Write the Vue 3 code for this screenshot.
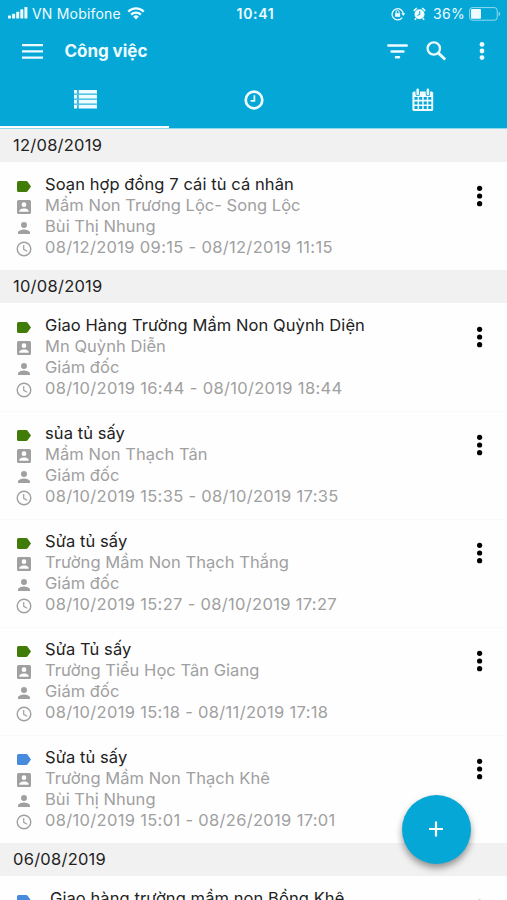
<script setup>
const groups = [
  {
    date: '12/08/2019',
    tasks: [
      { title: 'Soạn hợp đồng 7 cái tù cá nhân', place: 'Mầm Non Trương Lộc- Song Lộc', person: 'Bùi Thị Nhung', time: '08/12/2019 09:15 - 08/12/2019 11:15', tag: 'green' },
    ],
  },
  {
    date: '10/08/2019',
    tasks: [
      { title: 'Giao Hàng Trường Mầm Non Quỳnh Diện', place: 'Mn Quỳnh Diễn', person: 'Giám đốc', time: '08/10/2019 16:44 - 08/10/2019 18:44', tag: 'green' },
      { title: 'sủa tủ sấy', place: 'Mầm Non Thạch Tân', person: 'Giám đốc', time: '08/10/2019 15:35 - 08/10/2019 17:35', tag: 'green' },
      { title: 'Sửa tủ sấy', place: 'Trường Mầm Non Thạch Thắng', person: 'Giám đốc', time: '08/10/2019 15:27 - 08/10/2019 17:27', tag: 'green' },
      { title: 'Sửa Tủ sấy', place: 'Trường Tiểu Học Tân Giang', person: 'Giám đốc', time: '08/10/2019 15:18 - 08/11/2019 17:18', tag: 'green' },
      { title: 'Sửa tủ sấy', place: 'Trường Mầm Non Thạch Khê', person: 'Bùi Thị Nhung', time: '08/10/2019 15:01 - 08/26/2019 17:01', tag: 'blue' },
    ],
  },
  {
    date: '06/08/2019',
    tasks: [
      { title: 'Giao hàng trường mầm non Bồng Khê', place: '', person: '', time: '', tag: 'blue', indent: true },
    ],
  },
]
</script>

<template>
  <div class="screen">
    <header class="top">
      <div class="status">
        <div class="carrier">
          <svg class="signal" width="20" height="12" viewBox="0 0 20 12" fill="currentColor">
            <rect x="0" y="8.4" width="3" height="3.2" rx=".6" /><rect x="4.1" y="6.8" width="3" height="4.8" rx=".6" />
            <rect x="8.2" y="4.7" width="3" height="6.9" rx=".6" /><rect x="12.3" y="2.3" width="3" height="9.3" rx=".6" />
            <rect x="16.4" y="0" width="3" height="11.6" rx=".6" />
          </svg>
          <span>VN Mobifone</span>
          <svg class="wifi" width="18" height="13" viewBox="0 0 18 13" fill="none" stroke="currentColor" stroke-width="2.2">
            <path d="M1.2 4.6a11 11 0 0 1 15.6 0M4.1 7.6a7 7 0 0 1 9.8 0" />
            <path d="M9 12.5 6.2 9.7a4 4 0 0 1 5.6 0z" fill="currentColor" stroke="none" />
          </svg>
        </div>
        <strong class="clock">10:41</strong>
        <div class="power">
          <svg width="15" height="14" viewBox="0 0 15 14" fill="none" stroke="currentColor" stroke-width="1.3">
            <path d="M11.2 10.7A5.6 5.6 0 1 1 12.3 7" /><path d="M10.3 6.3h4l-2 2.6z" fill="currentColor" stroke="none" />
            <rect x="4.1" y="6.2" width="5" height="3.6" fill="currentColor" stroke="none" /><path d="M5.1 6.5V5a1.5 1.5 0 0 1 3 0v1.5" stroke-width="1" />
          </svg>
          <svg class="alarm" width="13" height="14" viewBox="0 0 13 14">
            <circle cx="6.5" cy="7.3" r="5" fill="currentColor" />
            <path d="M.8 3.8 3.8 1M9.2 1l3 2.8M3.1 11.2l-1.2 1.7M9.9 11.2l1.2 1.7" stroke="currentColor" stroke-width="1.6" fill="none" />
            <path d="M6.7 4.2v3.3L4.5 8.4" fill="none" stroke="#05a7d6" stroke-width="1" />
          </svg>
          <span>36%</span>
          <svg class="battery" width="32" height="14" viewBox="0 0 32 14">
            <rect x=".6" y=".6" width="27.6" height="12.6" rx="2.8" fill="none" stroke="currentColor" stroke-opacity=".6" />
            <rect x="2" y="2" width="10" height="9.8" rx="1" fill="currentColor" />
            <path d="M29.6 4.8q1.6.6 1.6 2.2t-1.6 2.2z" fill="currentColor" opacity=".6" />
          </svg>
        </div>
      </div>

      <div class="bar">
        <svg width="21" height="15" viewBox="0 0 21 15" fill="currentColor"><path d="M0 0h21v2.3H0zM0 6.2h21v2.3H0zM0 12.4h21v2.3H0z" /></svg>
        <h1>Công việc</h1>
        <svg class="filter" width="21" height="15" viewBox="0 0 21 15" fill="none" stroke="currentColor" stroke-width="2.5" stroke-linecap="round"><path d="M1.3 1.5h18.4M4.6 7.4h11.8M9 13.2h3" /></svg>
        <svg class="search" width="21" height="20" viewBox="0 0 21 20" fill="none" stroke="currentColor"><circle cx="7.8" cy="7.5" r="6.2" stroke-width="2.3" /><path d="m12.2 11.9 7 6.6" stroke-width="2.9" /></svg>
        <svg class="more" width="6" height="20" viewBox="0 0 6 20" fill="currentColor"><circle cx="3" cy="3.4" r="2.4" /><circle cx="3" cy="10" r="2.4" /><circle cx="3" cy="16.6" r="2.4" /></svg>
      </div>

      <nav class="tabs">
        <div class="tab active">
          <svg width="23" height="19" viewBox="0 0 23 19" fill="currentColor">
            <path d="M0 0h3.2v3.4H0zM4.7 0H23v3.4H4.7zM0 5h3.2v3.4H0zM4.7 5H23v3.4H4.7zM0 10h3.2v3.4H0zM4.7 10H23v3.4H4.7zM0 15h3.2v3.4H0zM4.7 15H23v3.4H4.7z" />
            <path d="M0 3.4h23V5H0zM0 8.4h23V10H0zM0 13.4h23V15H0z" opacity=".35" />
          </svg>
        </div>
        <div class="tab">
          <svg width="20" height="20" viewBox="0 0 20 20" fill="none" stroke="currentColor"><circle cx="10" cy="10" r="8.3" stroke-width="2.7" /><path d="M10.4 5.2v5.6H6.6" stroke-width="1.7" /></svg>
        </div>
        <div class="tab">
          <svg width="22" height="24" viewBox="0 0 22 24">
            <rect x=".4" y="3.6" width="20.8" height="19.4" rx="1.6" fill="currentColor" />
            <path d="M5.7 1.9v4M15.9 1.9v4" stroke="#05a7d6" stroke-width="4.4" stroke-linecap="round" />
            <path d="M5.7 1.9v4M15.9 1.9v4" stroke="currentColor" stroke-width="2.6" stroke-linecap="round" />
            <path d="M2.5 8.9h3.1v2.9H2.5zM7.1 8.9h3.1v2.9H7.1zM11.7 8.9h3.1v2.9h-3.1zM16.3 8.9h3v2.9h-3zM2.5 13.4h3.1v3H2.5zM7.1 13.4h3.1v3H7.1zM11.7 13.4h3.1v3h-3.1zM16.3 13.4h3v3h-3zM2.5 18.1h3.1v3H2.5zM7.1 18.1h3.1v3H7.1zM11.7 18.1h3.1v3h-3.1zM16.3 18.1h3v3h-3z" fill="#05a7d6" />
          </svg>
        </div>
      </nav>
    </header>

    <main>
      <section v-for="g in groups" :key="g.date">
        <h2>{{ g.date }}</h2>
        <article v-for="t in g.tasks" :key="t.time" class="task">
          <div class="lines">
            <div class="line title" :class="{ indent: t.indent }">
              <svg width="14" height="11" viewBox="0 0 14 11" :class="t.tag"><path d="M1.5 0h7.7q.9 0 1.4.7L14 5.5l-3.4 4.8q-.5.7-1.4.7H1.5Q0 11 0 9.5v-8Q0 0 1.5 0z" fill="currentColor" /></svg>
              <span>{{ t.title }}</span>
            </div>
            <div class="line">
              <svg width="14" height="14" viewBox="3 3 18 18"><path fill="currentColor" d="M3 5v14a2 2 0 0 0 2 2h14a2 2 0 0 0 2-2V5a2 2 0 0 0-2-2H5a2 2 0 0 0-2 2zm12 4a3 3 0 1 1-6 0 3 3 0 0 1 6 0zm-9 8c0-2 4-3.1 6-3.1s6 1.1 6 3.1v1H6z" /></svg>
              <span>{{ t.place }}</span>
            </div>
            <div class="line">
              <svg width="12" height="12" viewBox="4 4 16 16"><path fill="currentColor" d="M12 12a4 4 0 1 0 0-8 4 4 0 0 0 0 8zm0 2c-2.7 0-8 1.3-8 4v2h16v-2c0-2.7-5.3-4-8-4z" /></svg>
              <span>{{ t.person }}</span>
            </div>
            <div class="line time">
              <svg width="16" height="16" viewBox="0 0 16 16" fill="none" stroke="currentColor" stroke-width="1.4"><circle cx="8" cy="8" r="6.8" /><path d="M7.7 4v4.3l3.4 2" stroke-width="1.2" /></svg>
              <span>{{ t.time }}</span>
            </div>
          </div>
          <svg class="dots" width="6" height="22" viewBox="0 0 6 22" fill="#000"><circle cx="2.6" cy="3.3" r="2.6" /><circle cx="2.6" cy="11" r="2.6" /><circle cx="2.6" cy="18.7" r="2.6" /></svg>
        </article>
      </section>
    </main>

    <button class="fab" aria-label="+">
      <svg width="14" height="16" viewBox="0 0 14 16" stroke="#fff" stroke-width="2.2"><path d="M0 8h14M7 .5v15" /></svg>
    </button>
  </div>
</template>

<style>
body { margin: 0; background: #fff; }
</style>
<style scoped>
.screen { position: relative; width: 507px; height: 900px; overflow: hidden; background: #fefefe; font-family: Inter, "Noto Sans", sans-serif; color: #222; }
svg { display: block; flex: none; }
.top { height: 129px; box-sizing: border-box; background: #05a7d6; color: #eefbff; display: flex; flex-direction: column; }
.status { height: 27px; display: grid; grid-template-columns: 1fr auto 1fr; align-items: center; padding: 0 6px 0 8px; font-size: 14px; }
.carrier, .power { display: flex; align-items: center; }
.carrier span { margin-left: 4px; letter-spacing: .2px; }
.signal { margin-top: -2px; }
.wifi { margin-left: 6.5px; margin-top: -1px; }
.clock { font-weight: 600; font-size: 14px; letter-spacing: .7px; padding-left: 2px; }
.power { justify-content: flex-end; }
.power > svg:first-child { margin-right: 1px; }
.alarm { margin-left: 6px; }
.power span { margin-left: 7px; font-size: 14px; letter-spacing: .3px; }
.battery { margin-left: 4px; }
.bar { height: 48px; display: flex; align-items: center; padding: 0 22px; }
h1 { margin: 0 auto 0 21.5px; font-size: 17px; line-height: 24px; font-weight: 700; letter-spacing: -.05px; }
.search { margin-left: 18px; }
.more { margin-left: 32px; }
.tabs { flex: 1; display: grid; grid-template-columns: repeat(3, 1fr); border-bottom: 1px solid #8ed8ed; }
.tab { display: flex; align-items: center; justify-content: center; padding-bottom: 2px; border-bottom: 2px solid transparent; }
.active { border-color: #fff; padding-left: 1px; }
h2 { margin: 0; height: 33px; line-height: 33px; padding-left: 13px; background: #f1f1f1; font-size: 16.5px; font-weight: 400; letter-spacing: .25px; }
.task { height: 108px; box-sizing: border-box; padding: 12px 24px 0 16px; display: flex; justify-content: space-between; align-items: flex-start; }
.task + .task { border-top: 1px solid #fafafa; padding-top: 11px; }
.line { display: grid; grid-template-columns: 16px auto; column-gap: 13px; align-items: center; height: 21px; line-height: 21px; font-size: 16.5px; letter-spacing: .04px; color: #a0a0a0; white-space: nowrap; }
.line svg { justify-self: center; position: relative; top: 1.5px; }
.title { color: #222; letter-spacing: .08px; }
.time { letter-spacing: .32px; }
.indent { column-gap: 18px; }
.green { color: #427c08; }
.blue { color: #468bdc; }
.dots { margin-top: 10.5px; }
.fab { position: absolute; left: 402px; top: 795px; width: 69px; height: 69px; padding: 0; border: 0; border-radius: 50%; background: #05a7d6; display: flex; align-items: center; justify-content: center; box-shadow: 0 4px 7px rgba(0, 0, 0, .4); }
.fab svg { position: relative; left: -1px; top: -1px; }
</style>
